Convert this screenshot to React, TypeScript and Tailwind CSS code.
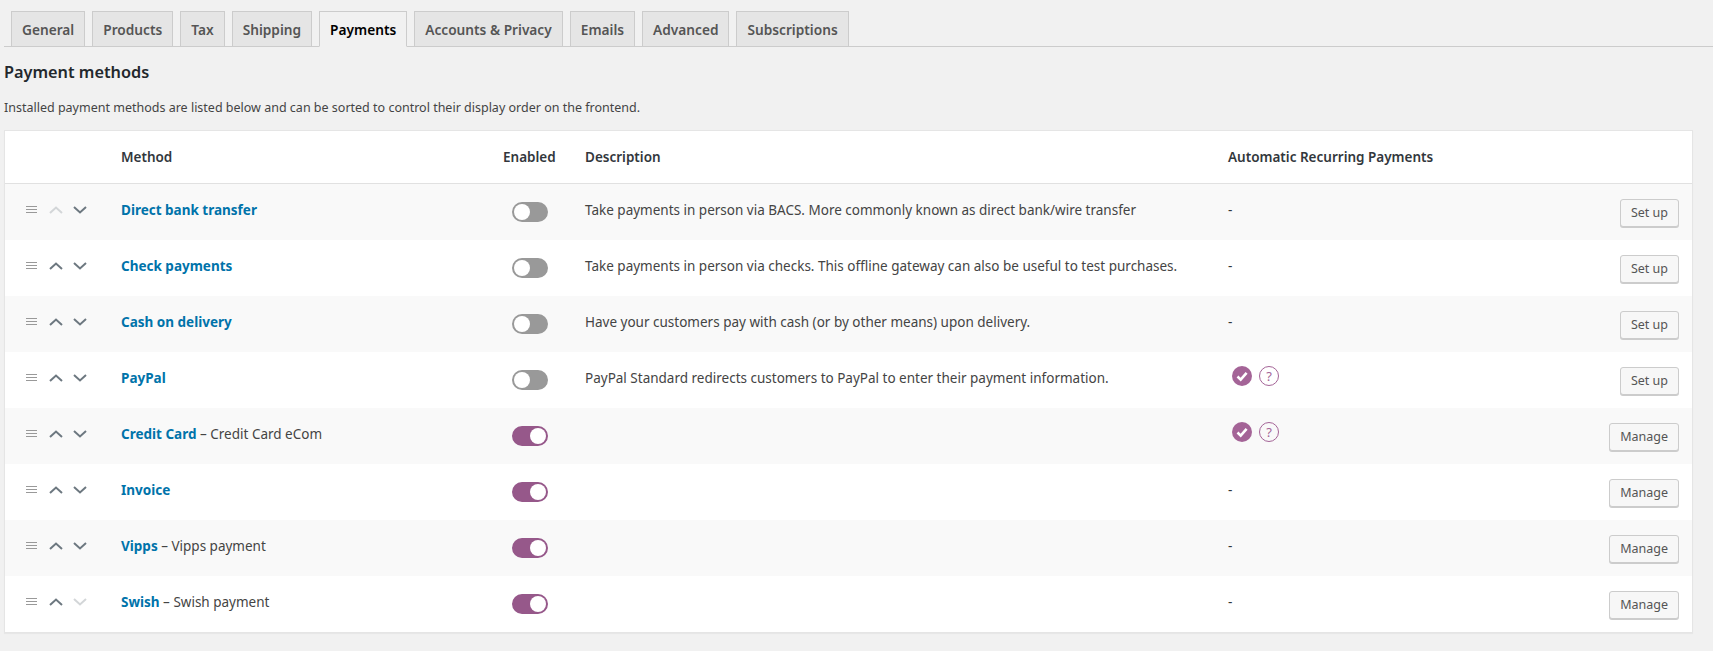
const tabs = ["General", "Products", "Tax", "Shipping", "Payments", "Accounts & Privacy", "Emails", "Advanced", "Subscriptions"];

const methods = [
  { name: "Direct bank transfer", desc: "Take payments in person via BACS. More commonly known as direct bank/wire transfer", on: false, recurring: false, action: "Set up" },
  { name: "Check payments", desc: "Take payments in person via checks. This offline gateway can also be useful to test purchases.", on: false, recurring: false, action: "Set up" },
  { name: "Cash on delivery", desc: "Have your customers pay with cash (or by other means) upon delivery.", on: false, recurring: false, action: "Set up" },
  { name: "PayPal", desc: "PayPal Standard redirects customers to PayPal to enter their payment information.", on: false, recurring: true, action: "Set up" },
  { name: "Credit Card", sub: "Credit Card eCom", desc: "", on: true, recurring: true, action: "Manage" },
  { name: "Invoice", desc: "", on: true, recurring: false, action: "Manage" },
  { name: "Vipps", sub: "Vipps payment", desc: "", on: true, recurring: false, action: "Manage" },
  { name: "Swish", sub: "Swish payment", desc: "", on: true, recurring: false, action: "Manage" },
];

const gridCols = "grid grid-cols-[116px_382px_82px_643px_1fr_auto]";

function Chevron({ up, disabled }: { up?: boolean; disabled?: boolean }) {
  return (
    <svg width="14" height="8" viewBox="0 0 14 8" fill="none" className={disabled ? "text-[#d3d6d8]" : "text-[#6d7880]"}>
      <path d={up ? "M1 7L7 1.5L13 7" : "M1 1L7 6.5L13 1"} stroke="currentColor" strokeWidth="2" />
    </svg>
  );
}

function DragHandle() {
  return (
    <svg width="11" height="8" viewBox="0 0 11 8" className="text-[#999]">
      <path d="M0 .5h11M0 3.5h11M0 6.5h11" stroke="currentColor" strokeWidth="1" />
    </svg>
  );
}

function Toggle({ on }: { on: boolean }) {
  return (
    <span className={`flex w-9 h-5 rounded-full border-2 ${on ? "justify-end bg-[#96588a] border-[#96588a]" : "justify-start bg-[#999] border-[#999]"}`}>
      <span className="block w-4 h-4 rounded-full bg-white" />
    </span>
  );
}

function RecurringIcons() {
  return (
    <div className="flex items-center gap-[7px] pl-1 -mt-[2px]">
      <svg width="20" height="20" viewBox="0 0 20 20">
        <circle cx="10" cy="10" r="10" fill="#a46497" />
        <path d="M5.5 10.5L8.7 13.6L14.6 6.9" fill="none" stroke="#fff" strokeWidth="2.6" />
      </svg>
      <span className="flex items-center justify-center w-5 h-5 rounded-full border border-[#a46497] text-[#a46497] text-[13px] leading-none">?</span>
    </div>
  );
}

export default function App() {
  return (
    <div className="min-h-[651px] bg-[#f1f1f1] pl-1 pr-5 pt-[11px] text-[13.5px] text-[#444] font-['Noto_Sans','Open_Sans',sans-serif]">
      <nav className="flex items-end gap-[7px] pl-[7px] -mr-5 h-9 border-b border-[#ccc]">
        {tabs.map((t) =>
          t === "Payments" ? (
            <span key={t} className="h-9 -mb-px pt-[2px] px-[10px] flex items-center border border-[#ccc] border-b-[#f1f1f1] bg-[#f1f1f1] text-[13.7px] font-semibold text-black">{t}</span>
          ) : (
            <span key={t} className="h-[35px] pt-[2px] px-[10px] flex items-center border border-[#ccc] border-b-0 bg-[#e5e5e5] text-[13.7px] font-semibold text-[#555]">{t}</span>
          )
        )}
      </nav>

      <h2 className="mt-[13px] text-[16.3px] leading-[24px] font-semibold text-[#23282d]">Payment methods</h2>
      <p className="mt-[14px] text-[12.5px] leading-[20px]">Installed payment methods are listed below and can be sorted to control their display order on the frontend.</p>

      <div className="mt-3 bg-white border border-[#e5e5e5] shadow-[0_1px_1px_rgba(0,0,0,0.04)]">
        <div className={`${gridCols} h-[53px] pt-px items-center border-b border-[#e1e1e1] font-semibold text-[#32373c]`}>
          <span />
          <span>Method</span>
          <span>Enabled</span>
          <span>Description</span>
          <span>Automatic Recurring Payments</span>
        </div>

        {methods.map((m, i) => (
          <div key={m.name} className={`${gridCols} h-14 ${i % 2 === 0 ? "bg-[#f9f9f9]" : "bg-white"}`}>
            <div className="flex items-center pl-[21px] pt-[22px] h-[30px]">
              <DragHandle />
              <span className="ml-3"><Chevron up disabled={i === 0} /></span>
              <span className="ml-[10px]"><Chevron disabled={i === methods.length - 1} /></span>
            </div>
            <div className="pt-4 leading-[20px]">
              <a className="font-bold text-[#0073aa]">{m.name}</a>
              {m.sub && <span> – {m.sub}</span>}
            </div>
            <div className="pt-[18px] pl-[9px]"><Toggle on={m.on} /></div>
            <div className="pt-4 leading-[20px]">{m.desc}</div>
            <div className="pt-4 leading-[20px] text-[#32373c]">{m.recurring ? <RecurringIcons /> : "-"}</div>
            <div className="flex justify-end pt-[15px] pr-[13px]">
              <button className="h-7 px-[10px] rounded-[3px] border border-[#ccc] bg-[#f7f7f7] shadow-[0_1px_0_#ccc] text-[12.5px] text-[#555]">{m.action}</button>
            </div>
          </div>
        ))}
      </div>
    </div>
  );
}
